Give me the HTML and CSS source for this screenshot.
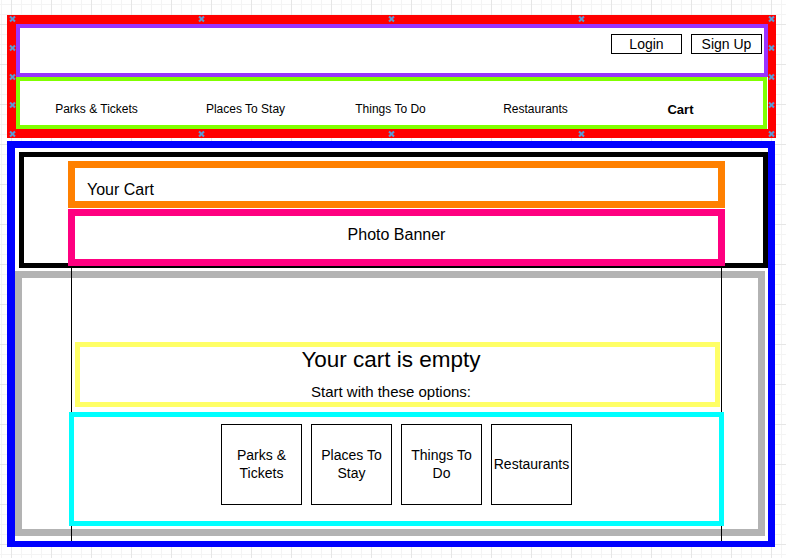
FILE: index.html
```html
<!DOCTYPE html>
<html lang="en">
<head>
<meta charset="utf-8">
<title>Your Cart</title>
<link rel="stylesheet" href="styles.css">
</head>
<body>
<div class="page">
  <header class="header">
    <div class="topbar">
      <button class="btn">Login</button>
      <button class="btn">Sign Up</button>
    </div>
    <nav class="nav">
      <a class="nav-item">Parks &amp; Tickets</a>
      <a class="nav-item">Places To Stay</a>
      <a class="nav-item">Things To Do</a>
      <a class="nav-item">Restaurants</a>
      <a class="nav-item current">Cart</a>
    </nav>
    <span class="mk c0 r0"></span><span class="mk c1 r0"></span><span class="mk c2 r0"></span><span class="mk c3 r0"></span><span class="mk c4 r0"></span>
    <span class="mk c0 r1"></span><span class="mk c0 r2"></span><span class="mk c0 r3"></span>
    <span class="mk c4 r1"></span><span class="mk c4 r2"></span><span class="mk c4 r3"></span>
    <span class="mk c0 r4"></span><span class="mk c1 r4"></span><span class="mk c2 r4"></span><span class="mk c3 r4"></span><span class="mk c4 r4"></span>
  </header>
  <main class="main">
    <section class="hero">
      <div class="title-bar">Your Cart</div>
      <div class="banner">Photo Banner</div>
    </section>
    <section class="content">
      <div class="empty">
        <h1 class="empty-title">Your cart is empty</h1>
        <p class="empty-sub">Start with these options:</p>
      </div>
      <div class="options">
        <div class="card">Parks &amp; Tickets</div>
        <div class="card">Places To Stay</div>
        <div class="card">Things To Do</div>
        <div class="card">Restaurants</div>
      </div>
    </section>
    <div class="frame"></div>
  </main>
</div>
</body>
</html>
```

FILE: styles.css
```css
* {
  box-sizing: border-box;
}

html {
  height: 100%;
  background-color: #ffffff;
  background-image:
    linear-gradient(to right, #e6e6e6 1px, transparent 1px),
    linear-gradient(to bottom, #e6e6e6 1px, transparent 1px),
    linear-gradient(to right, #f4f4f4 1px, transparent 1px),
    linear-gradient(to bottom, #f4f4f4 1px, transparent 1px);
  background-size: 40px 40px, 40px 40px, 10px 10px, 10px 10px;
  background-position: 11px 0, 0 24px, 1px 0, 0 4px;
}

body {
  margin: 0;
  height: 100%;
  overflow: hidden;
  font-family: "Liberation Sans", Arial, Helvetica, sans-serif;
  color: #000;
}

.page {
  padding: 15px 0 0 7px;
}

/* ---------- header ---------- */
.header {
  position: relative;
  width: 769px;
  border: 9px solid #ff0000;
  border-right-width: 8px;
  background: #fff;
}

.topbar {
  height: 53px;
  border: 4px solid #9933ff;
  display: flex;
  justify-content: flex-end;
  align-items: flex-start;
  gap: 9px;
  padding: 6px 2px 0 0;
}

.btn {
  width: 71px;
  height: 20px;
  padding: 0;
  margin: 0;
  border: 1px solid #000;
  background: #fff;
  font-family: inherit;
  font-size: 14px;
  color: #000;
  line-height: 18px;
}

.nav {
  width: 751px;
  height: 52px;
  border: 4px solid #80ff00;
  display: grid;
  grid-template-columns: 153px repeat(4, 145px);
  align-items: start;
  padding-top: 21px;
}

.nav-item {
  text-align: center;
  font-size: 12px;
  white-space: nowrap;
}

.nav-item.current {
  font-size: 13px;
  font-weight: bold;
}

.mk {
  position: absolute;
  width: 6px;
  height: 6px;
}

.mk::before,
.mk::after {
  content: "";
  position: absolute;
  left: -0.5px;
  top: 2px;
  width: 7px;
  height: 2px;
  background: #5b9bd5;
  transform: rotate(45deg);
}

.mk::after {
  transform: rotate(-45deg);
}

.c0 { left: -7px; }
.c1 { left: 182px; }
.c2 { left: 372px; }
.c3 { left: 562px; }
.c4 { left: 752px; }
.r0 { top: -8px; }
.r1 { top: 21px; }
.r2 { top: 50px; }
.r3 { top: 78px; }
.r4 { top: 107px; }

/* ---------- main ---------- */
.main {
  position: relative;
  width: 768px;
  height: 406px;
  margin-top: 3px;
  border-style: solid;
  border-color: #0000ff;
  border-width: 7px 7px 6px 8px;
  background: #fff;
}

.hero {
  width: 749px;
  height: 116px;
  margin: 4px 0 0 4px;
  border: 5px solid #000;
}

.title-bar {
  width: 657px;
  height: 47px;
  margin: 4px 0 0 44px;
  border: 7px solid #ff8000;
  padding: 12.5px 0 0 12px;
  font-size: 16px;
}

.banner {
  width: 657px;
  height: 57px;
  margin: 1px 0 0 44px;
  border: 7px solid #ff0080;
  padding-top: 9.5px;
  text-align: center;
  font-size: 16px;
}

.content {
  width: 750px;
  height: 265px;
  margin-top: 3px;
  border: 7px solid #b3b3b3;
}

.empty {
  width: 645px;
  height: 65px;
  margin: 64px 0 0 53px;
  border: 5px solid #ffff66;
  padding-right: 13px;
  text-align: center;
}

.empty-title {
  margin: 0;
  font-size: 22.5px;
  font-weight: normal;
  line-height: normal;
}

.empty-sub {
  margin: 10px 0 0;
  font-size: 15px;
  line-height: normal;
}

.options {
  position: relative;
  z-index: 1;
  width: 655px;
  height: 114px;
  margin: 5px 0 0 47px;
  border: 5px solid #00ffff;
  padding-top: 7px;
  display: flex;
  justify-content: center;
  align-items: flex-start;
  gap: 9px;
}

.card {
  width: 81px;
  height: 81px;
  border: 1px solid #000;
  display: flex;
  align-items: center;
  justify-content: center;
  text-align: center;
  font-size: 14px;
  line-height: 17.5px;
  padding: 0 1px;
}

.frame {
  position: absolute;
  left: 56px;
  top: 118px;
  width: 651px;
  height: 275px;
  border-left: 1px solid #000;
  border-right: 1px solid #000;
}
```
